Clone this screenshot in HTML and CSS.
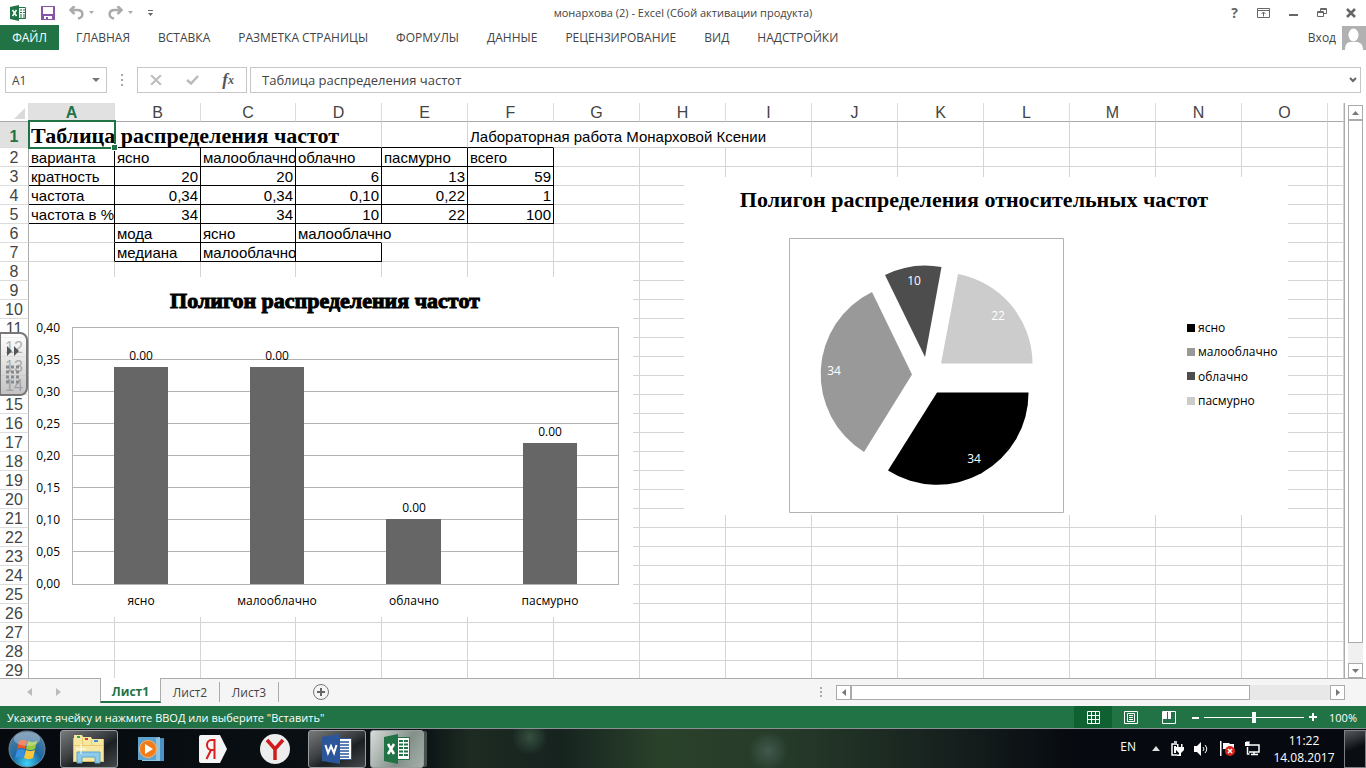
FILE: index.html
```html
<!DOCTYPE html>
<html lang="ru">
<head>
<meta charset="utf-8">
<title>монархова (2) - Excel</title>
<link rel="stylesheet" href="styles.css">
</head>
<body>
<header class="titlebar">
  <div class="quick">
    <svg class="ico-app" width="17" height="16" viewBox="0 0 17 16"><path fill="#fff" stroke="#217346" d="M8 2.5h7.5v11H8z"/><path stroke="#217346" d="M10 5h2M13 5h2M10 7.500h2M13 7.500h2M10 10h2M13 10h2M10 12h2M13 12h2"/><path fill="#217346" d="M0 2l9-2v16l-9-2z"/><path stroke="#fff" stroke-width="1.500" d="M2.500 5l4 6M6.500 5l-4 6"/></svg>
    <button class="flat" aria-label="Сохранить"><svg width="14" height="14" viewBox="0 0 14 14"><path fill="#8655a8" d="M0 0h14v14H0z"/><path fill="#fff" d="M2 1h10v7H2zM3 10h8v3H3z"/><path fill="#8655a8" d="M5 11h2v2H5z"/></svg></button>
    <button class="flat undo" aria-label="Отменить"><svg width="25" height="14" viewBox="0 0 25 14"><path fill="none" stroke="#aaa" stroke-width="2.500" d="M5.500 0L1.500 4 5.500 8M2 4h6c7 0 7 7.500 1 8.500"/><path fill="#aaa" d="M20 5h5l-2.500 3z"/></svg></button>
    <button class="flat redo" aria-label="Вернуть"><svg width="25" height="14" viewBox="0 0 25 14"><path fill="none" stroke="#aaa" stroke-width="2.500" d="M9.500 0l4 4-4 4M13 4H7C0 4 0 11.500 6 12.500"/><path fill="#aaa" d="M20 5h5l-2.500 3z"/></svg></button>
    <button class="flat more" aria-label="Настройка панели"><svg width="5" height="8" viewBox="0 0 5 8"><path fill="#666" d="M0 1h5v1H0zM0 4h5L2.500 7z"/></svg></button>
  </div>
  <h1 class="doc-title">монархова (2) - Excel (Сбой активации продукта)</h1>
  <div class="window-buttons">
    <button class="flat help" aria-label="Справка">?</button>
    <button class="flat" aria-label="Параметры ленты"><svg width="13" height="10" viewBox="0 0 13 10"><path fill="none" stroke="#666" d="M.5.5h12v9H.5zM.5 2.500h12M6.500 8.500V4M4.500 6l2-2 2 2"/></svg></button>
    <button class="flat" aria-label="Свернуть"><svg width="9" height="10" viewBox="0 0 9 10"><path fill="#666" d="M0 6h9v2H0z"/></svg></button>
    <button class="flat" aria-label="Восстановить"><svg width="10" height="10" viewBox="0 0 10 10"><path fill="none" stroke="#666" d="M.5 3.500h6v5h-6zM.5 4.500h6M3.500 3V.5h6v5H7M3 1.500h6"/></svg></button>
    <button class="flat" aria-label="Закрыть"><svg width="10" height="10" viewBox="0 0 10 10"><path stroke="#666" stroke-width="2.500" d="M1 1l8 8M9 1L1 9"/></svg></button>
  </div>
</header>
<nav class="ribbon">
  <button class="flat file">ФАЙЛ</button>
  <div class="tabs">
    <button class="flat">ГЛАВНАЯ</button>
    <button class="flat">ВСТАВКА</button>
    <button class="flat">РАЗМЕТКА СТРАНИЦЫ</button>
    <button class="flat">ФОРМУЛЫ</button>
    <button class="flat">ДАННЫЕ</button>
    <button class="flat">РЕЦЕНЗИРОВАНИЕ</button>
    <button class="flat">ВИД</button>
    <button class="flat">НАДСТРОЙКИ</button>
  </div>
  <a class="login" href="#">Вход</a>
  <svg class="avatar" width="24" height="24" viewBox="0 0 24 24"><path fill="#b1b1b1" d="M0 0h24v24H0z"/><ellipse cx="11.500" cy="9" rx="5" ry="6.500" fill="#fff"/><path fill="#fff" d="M3 24c0-7 3-8 6-8h5c4 0 7 2 7 8z"/></svg>
</nav>
<section class="formula">
  <div class="namebox"><input class="name-input" aria-label="Имя ячейки" value="A1"><svg width="8" height="4" viewBox="0 0 8 4"><path fill="#777" d="M0 0h8L4 4z"/></svg></div>
  <svg class="grip" width="2" height="12" viewBox="0 0 2 12"><path fill="#aaa" d="M0 0h2v2H0zM0 5h2v2H0zM0 10h2v2H0z"/></svg>
  <div class="fx-box">
    <button class="flat" aria-label="Отмена"><svg width="12" height="10" viewBox="0 0 12 10"><path stroke="#bbb" stroke-width="2" d="M1 0l10 10M11 0L1 10"/></svg></button>
    <button class="flat" aria-label="Ввод"><svg width="13" height="10" viewBox="0 0 13 10"><path fill="none" stroke="#bbb" stroke-width="2.500" d="M1 5l4 3.500L12 1"/></svg></button>
    <button class="flat fx" aria-label="Вставить функцию">f<small>x</small></button>
  </div>
  <div class="formula-field"><input class="formula-input" aria-label="Строка формул" value="Таблица распределения частот"><svg width="8" height="6" viewBox="0 0 8 6"><path fill="none" stroke="#666" stroke-width="2" d="M1 1l3 3 3-3"/></svg></div>
</section>
<main class="workspace">
  <div class="grid-wrap">
    <table class="grid">
      <colgroup><col class="c-num"><col class="c"><col class="c"><col class="c-wide"><col class="c"><col class="c"><col class="c"><col class="c"><col class="c"><col class="c"><col class="c"><col class="c"><col class="c"><col class="c"><col class="c"><col class="c"><col></colgroup>
      <thead><tr><th class="corner"><svg width="11" height="11" viewBox="0 0 11 11"><path fill="#dadada" d="M11 0v11H0z"/></svg></th><th class="active">A</th><th>B</th><th>C</th><th>D</th><th>E</th><th>F</th><th>G</th><th>H</th><th>I</th><th>J</th><th>K</th><th>L</th><th>M</th><th>N</th><th>O</th><th></th></tr></thead>
      <tbody>
      <tr class="first"><th class="active">1</th><td class="heading kb" colspan="4">Таблица распределения частот<span class="selection"></span></td><td class="kb"></td><td class="kb" ><span class="spill">Лабораторная работа Монарховой Ксении</span></td><td class="open"></td><td class="open"></td><td></td><td></td><td></td><td></td><td></td><td></td><td></td><td></td></tr>
      <tr class="boxed"><th>2</th><td>варианта</td><td>ясно</td><td>малооблачно</td><td>облачно</td><td>пасмурно</td><td>всего</td><td></td><td></td><td></td><td></td><td></td><td></td><td></td><td></td><td></td><td></td></tr>
      <tr class="boxed nums"><th>3</th><td>кратность</td><td>20</td><td>20</td><td>6</td><td>13</td><td>59</td><td></td><td></td><td></td><td></td><td></td><td></td><td></td><td></td><td></td><td></td></tr>
      <tr class="boxed nums"><th>4</th><td>частота</td><td>0,34</td><td>0,34</td><td>0,10</td><td>0,22</td><td>1</td><td></td><td></td><td></td><td></td><td></td><td></td><td></td><td></td><td></td><td></td></tr>
      <tr class="boxed nums"><th>5</th><td>частота в %</td><td>34</td><td>34</td><td>10</td><td>22</td><td>100</td><td></td><td></td><td></td><td></td><td></td><td></td><td></td><td></td><td></td><td></td></tr>
      <tr><th>6</th><td class="kr"></td><td class="kb kr">мода</td><td class="kb kr">ясно</td><td class="kb open">малооблачно</td><td></td><td></td><td></td><td></td><td></td><td></td><td></td><td></td><td></td><td></td><td></td><td></td></tr>
      <tr><th>7</th><td class="kr"></td><td class="kb kr">медиана</td><td class="kb kr">малооблачно</td><td class="kb kr"></td><td></td><td></td><td></td><td></td><td></td><td></td><td></td><td></td><td></td><td></td><td></td><td></td></tr>
      <tr><th>8<td><td><td><td><td><td><td><td><td><td><td><td><td><td><td><td>
      <tr><th>9<td><td><td><td><td><td><td><td><td><td><td><td><td><td><td><td>
      <tr><th>10<td><td><td><td><td><td><td><td><td><td><td><td><td><td><td><td>
      <tr><th>11<td><td><td><td><td><td><td><td><td><td><td><td><td><td><td><td>
      <tr><th>12<td><td><td><td><td><td><td><td><td><td><td><td><td><td><td><td>
      <tr><th>13<td><td><td><td><td><td><td><td><td><td><td><td><td><td><td><td>
      <tr><th>14<td><td><td><td><td><td><td><td><td><td><td><td><td><td><td><td>
      <tr><th>15<td><td><td><td><td><td><td><td><td><td><td><td><td><td><td><td>
      <tr><th>16<td><td><td><td><td><td><td><td><td><td><td><td><td><td><td><td>
      <tr><th>17<td><td><td><td><td><td><td><td><td><td><td><td><td><td><td><td>
      <tr><th>18<td><td><td><td><td><td><td><td><td><td><td><td><td><td><td><td>
      <tr><th>19<td><td><td><td><td><td><td><td><td><td><td><td><td><td><td><td>
      <tr><th>20<td><td><td><td><td><td><td><td><td><td><td><td><td><td><td><td>
      <tr><th>21<td><td><td><td><td><td><td><td><td><td><td><td><td><td><td><td>
      <tr><th>22<td><td><td><td><td><td><td><td><td><td><td><td><td><td><td><td>
      <tr><th>23<td><td><td><td><td><td><td><td><td><td><td><td><td><td><td><td>
      <tr><th>24<td><td><td><td><td><td><td><td><td><td><td><td><td><td><td><td>
      <tr><th>25<td><td><td><td><td><td><td><td><td><td><td><td><td><td><td><td>
      <tr><th>26<td><td><td><td><td><td><td><td><td><td><td><td><td><td><td><td>
      <tr><th>27<td><td><td><td><td><td><td><td><td><td><td><td><td><td><td><td>
      <tr><th>28<td><td><td><td><td><td><td><td><td><td><td><td><td><td><td><td>
      <tr><th>29<td><td><td><td><td><td><td><td><td><td><td><td><td><td><td><td>
      </tbody>
    </table>
    <svg class="chart bar-chart" width="604" height="340" viewBox="0 0 604 340">
      <text class="chart-title heavy" x="296" y="31">Полигон распределения частот</text>
      <path class="axis" d="M43 50.500h547M43 82.500h547M43 114.500h547M43 146.500h547M43 178.500h547M43 210.500h547M43 242.500h547M43 274.500h547M43 307.500h547M43.500 50v258M589.500 50v258"/>
      <g class="end"><text x="31" y="55">0,40</text><text x="31" y="87">0,35</text><text x="31" y="119">0,30</text><text x="31" y="151">0,25</text><text x="31" y="183">0,20</text><text x="31" y="215">0,15</text><text x="31" y="247">0,10</text><text x="31" y="279">0,05</text><text x="31" y="311">0,00</text></g>
      <path fill="#666" d="M85 90h54v217H85zM221 90h54v217h-54zM357 242h55v65h-55zM494 166h54v141h-54z"/>
      <g class="mid"><text x="112" y="83">0.00</text><text x="248" y="83">0.00</text><text x="385" y="235">0.00</text><text x="521" y="159">0.00</text>
      <text x="112" y="328">ясно</text><text x="248" y="328">малооблачно</text><text x="385" y="328">облачно</text><text x="521" y="328">пасмурно</text></g>
    </svg>
    <svg class="chart pie-chart" width="604" height="338" viewBox="0 0 604 338">
      <text class="chart-title" x="290" y="30">Полигон распределения относительных частот</text>
      <path class="axis" d="M105.500 61.500h274v274h-274z"/>
      <path d="M253 215.500h91.500A91.500 91.500 0 0 1 204 293.500z"/>
      <path fill="#999" d="M228 197.500L180 275A91.500 91.500 0 0 1 188 115z"/>
      <path fill="#4d4d4d" d="M241 180L201 98A91.500 91.500 0 0 1 257.500 90z"/>
      <path fill="#ccc" d="M257 186.500L274 97A91.500 91.500 0 0 1 348.500 186.500z"/>
      <g class="mid white"><text x="290" y="286">34</text><text x="150" y="198">34</text><text x="230" y="108">10</text><text x="314" y="143">22</text></g>
      <path d="M503 147h8v8h-8z"/><path fill="#999" d="M503 171h8v8h-8z"/><path fill="#4d4d4d" d="M503 195h8v8h-8z"/><path fill="#ccc" d="M503 220h8v8h-8z"/>
      <g><text x="514" y="155">ясно</text><text x="514" y="179">малооблачно</text><text x="514" y="204">облачно</text><text x="514" y="228">пасмурно</text></g>
    </svg>
    <button class="side-handle" aria-label="Панель"><svg width="15" height="42" viewBox="0 0 15 42"><path fill="#555" d="M1 3l5 5-5 5zM8 3l5 5-5 5z"/><path stroke="#8a8a8a" stroke-width="3" stroke-dasharray="3 2" d="M0 24h14M0 29h14M0 34h14M0 39h14"/></svg></button>
  </div>
  <div class="vscroll">
    <button class="sb" aria-label="Вверх"><svg width="7" height="4" viewBox="0 0 7 4"><path fill="#777" d="M0 4h7L3.500 0z"/></svg></button>
    <div class="thumb"></div><div class="track"></div>
    <button class="sb" aria-label="Вниз"><svg width="7" height="4" viewBox="0 0 7 4"><path fill="#777" d="M0 0h7L3.500 4z"/></svg></button>
  </div>
</main>
<footer class="sheetbar">
  <div class="arrows"><svg width="5" height="8" viewBox="0 0 5 8"><path fill="#bbb" d="M5 0v8L0 4z"/></svg><svg width="5" height="8" viewBox="0 0 5 8"><path fill="#bbb" d="M0 0v8l5-4z"/></svg></div>
  <button class="sheet current">Лист1</button>
  <button class="sheet">Лист2</button>
  <button class="sheet">Лист3</button>
  <button class="flat add" aria-label="Новый лист"><svg width="16" height="16" viewBox="0 0 16 16"><circle cx="8" cy="8" r="7.500" fill="none" stroke="#777"/><path stroke="#666" stroke-width="2" d="M8 4v8M4 8h8"/></svg></button>
  <svg class="grip" width="2" height="10" viewBox="0 0 2 10"><path fill="#aaa" d="M0 0h2v2H0zM0 4h2v2H0zM0 8h2v2H0z"/></svg>
  <div class="hscroll">
    <button class="sb" aria-label="Влево"><svg width="4" height="7" viewBox="0 0 4 7"><path fill="#777" d="M4 0v7L0 3.500z"/></svg></button>
    <div class="thumb"></div><div class="track"></div>
    <button class="sb" aria-label="Вправо"><svg width="4" height="7" viewBox="0 0 4 7"><path fill="#777" d="M0 0v7l4-3.500z"/></svg></button>
  </div>
</footer>
<div class="status">
  <span class="hint">Укажите ячейку и нажмите ВВОД или выберите "Вставить"</span>
  <button class="flat view on" aria-label="Обычный"><svg width="13" height="13" viewBox="0 0 13 13"><path fill="none" stroke="#fff" d="M.5.5h12v12H.5zM4.500 0v13M8.500 0v13M0 4.500h13M0 8.500h13"/></svg></button>
  <button class="flat view" aria-label="Разметка страницы"><svg width="14" height="13" viewBox="0 0 14 13"><path fill="none" stroke="#fff" d="M.5.5h13v12H.5zM3.500 2.500h7v8h-7zM5 4.500h4M5 6.500h4M5 8.500h4"/></svg></button>
  <button class="flat view" aria-label="Страничный"><svg width="14" height="13" viewBox="0 0 14 13"><path fill="none" stroke="#fff" d="M.5.5h13v12H.5z"/><path fill="#fff" d="M1 1h4v7H1zM6 1h3v7H6z"/></svg></button>
  <button class="flat zoom-step" aria-label="Уменьшить"><svg width="7" height="7" viewBox="0 0 7 7"><path fill="#fff" d="M0 3h7v2H0z"/></svg></button>
  <input class="zoom" type="range" min="0" max="100" value="50" aria-label="Масштаб">
  <button class="flat zoom-step" aria-label="Увеличить"><svg width="8" height="8" viewBox="0 0 8 8"><path fill="#fff" d="M0 3h8v2H0zM3 0h2v8H3z"/></svg></button>
  <span class="percent">100%</span>
</div>
<div class="taskbar">
  <button class="flat start" aria-label="Пуск"><svg width="38" height="38" viewBox="0 0 38 38"><defs><radialGradient id="orb" cx=".5" cy=".9" r=".9"><stop offset="0" stop-color="#3fd4f5"/><stop offset=".45" stop-color="#1a6aa5"/><stop offset="1" stop-color="#5c7f9c"/></radialGradient></defs><circle cx="19" cy="19" r="18" fill="url(#orb)" stroke="#6b8798"/><path fill="#e8582a" d="M11 11c3-2 5-1.500 8 0l-2 8c-3-1.500-5-1.500-8 0z"/><path fill="#9cc83c" d="M20 11c3 1.500 6 1.500 9 0l-2 8c-3 1.500-6 1.500-9 0z"/><path fill="#3b8fe0" d="M9 20c3-1.500 5-1 8 0l-2 8c-3-1.500-5-1.500-8 0z"/><path fill="#fbc63a" d="M18 20c3 1.500 5 1.500 9 0l-2 8c-3 1.500-6 1.500-9 0z"/><ellipse cx="19" cy="9" rx="13" ry="7" fill="#fff" opacity=".3"/></svg></button>
  <button class="task open-task" aria-label="Проводник"><svg width="34" height="30" viewBox="0 0 34 30"><path fill="#dcb95a" d="M1 4h10l2 3h8l2-2h9v23H1z"/><path fill="#f8e7a1" d="M2 1h8l1 2h8l1 2h11v22H2z"/><path fill="#e8ca70" d="M2 11h29v1H2zM10 4h1v8h-1zM19 6h1v6h-1z"/><path fill="#30a850" d="M5 2h3v2H5z"/><path fill="#d43a2a" d="M13 4h3v2h-3z"/><path fill="#3a90d0" d="M22 6h4v2h-4z"/><path fill="#8ecbea" stroke="#5ba4ca" d="M5 29V18h23v11h-5v-6H10v6z"/><path stroke="#fff" d="M9 10v10M4 15h10"/></svg></button>
  <button class="task" aria-label="Проигрыватель"><svg width="28" height="26" viewBox="0 0 28 26"><path fill="#4b93c4" d="M8 3l19-1v23H8z"/><path fill="#8fc4e2" d="M5 2l18-1v24H5z"/><path fill="#5ea4ce" d="M1 1h18v23H1z"/><circle cx="11" cy="13" r="8.500" fill="#f07c1c" stroke="#f9b46d"/><path fill="#fff" d="M8 8l8 5-8 5z"/></svg></button>
  <button class="task" aria-label="Яндекс"><svg width="28" height="28" viewBox="0 0 28 28"><path fill="#f5f5f5" d="M2 0h19l7 14-7 14H2c-2 0-2-2-2-2V2s0-2 2-2z"/><path fill="none" stroke="#d81e1e" stroke-width="2" d="M15.500 24V5h-3c-6 0-6 10 0 10h3M12 15L7.500 24"/></svg></button>
  <button class="task" aria-label="Яндекс.Браузер"><svg width="30" height="30" viewBox="0 0 30 30"><circle cx="15" cy="15" r="15" fill="#ededed"/><path fill="none" stroke="#cf1b1b" stroke-width="3.500" d="M7 6l8 9 8-9M15 14v12"/></svg></button>
  <button class="task open-task" aria-label="Word"><svg width="31" height="30" viewBox="0 0 31 30"><path fill="#fff" stroke="#2b579a" d="M17 4.500h12.500v21H17z"/><path stroke="#2b579a" stroke-width="1.500" d="M18 8h9M18 11h9M18 14h9M18 17h9M18 20h9M18 23h9"/><path fill="#2b579a" d="M0 3l18-3v30L0 27z"/><path fill="none" stroke="#fff" stroke-width="2" d="M3.500 11l2.500 8 3-7 3 7 2.500-8"/></svg></button>
  <button class="task open-task lit" aria-label="Excel"><svg width="27" height="30" viewBox="0 0 27 30"><path fill="#fff" stroke="#217346" d="M13 3.500h12.500v22H13z"/><path stroke="#217346" stroke-width="2" d="M15 7h4M20 7h4M15 10.500h4M20 10.500h4M15 14h4M20 14h4M15 17.500h4M20 17.500h4M15 21h4M20 21h4"/><path fill="#217346" d="M0 3l14-3v30L0 27z"/><path stroke="#fff" stroke-width="2.500" d="M4 10l6 10M10 10L4 20"/></svg></button>
  <div class="tray">
    <span class="lang">EN</span>
    <svg width="8" height="5" viewBox="0 0 8 5"><path fill="#ddd" d="M0 5h8L4 0z"/></svg>
    <svg width="14" height="16" viewBox="0 0 14 16"><path fill="none" stroke="#fff" stroke-width="1.500" d="M7 3H2v11h5M4 1h3"/><path fill="#fff" d="M4 5h2v7H4zM7 3h1.500v3H7zM11 3h1.500v3H11zM6 6h8v3l-3 3h-2L6 9zM9 11h2v4H7v-1.500h2z"/></svg>
    <svg width="16" height="14" viewBox="0 0 16 14"><path fill="#fff" d="M0 4h3l4-4v14L3 10H0z"/><path fill="none" stroke="#fff" d="M9 5q2 2 0 4M11 3q3.500 4 0 8"/></svg>
    <svg width="15" height="15" viewBox="0 0 15 15"><path fill="#fff" d="M0 0h1.500v15H0zM3 2h6l1 1h4v5H3z"/><circle cx="10" cy="10" r="5" fill="#d8261c"/><path stroke="#fff" stroke-width="1.500" d="M8 8l4 4M12 8l-4 4"/></svg>
    <svg width="15" height="15" viewBox="0 0 15 15"><path fill="none" stroke="#fff" stroke-width="1.500" d="M4 4h10v7H4M9 11v2M6 13.500h7M2.500 6v7h2"/><path fill="#fff" d="M0 1h1.500v-1h1v1h1V0h1v5H0z"/></svg>
    <div class="clock"><span>11:22</span><span>14.08.2017</span></div>
  </div>
  <button class="show-desktop" aria-label="Свернуть все окна"></button>
</div>
</body>
</html>
```
FILE: styles.css
```css
* { box-sizing: border-box; }
body { margin: 0; height: 100vh; display: flex; flex-direction: column; overflow: hidden; background: #fff; color: #444; font: 12px "Open Sans", "Noto Sans", sans-serif; }
svg { display: block; flex: none; }
button, input { font: inherit; color: inherit; padding: 0; border: 0; background: none; }
.flat { display: flex; align-items: center; justify-content: center; white-space: nowrap; }

.titlebar { flex: none; height: 25px; display: grid; grid-template-columns: 1fr auto 1fr; align-items: center; }
.quick { display: flex; align-items: center; padding-left: 10px; gap: 14px; }
.more { margin-left: 1px; }
.doc-title { margin: 0; font-size: 11px; font-weight: 400; }
.window-buttons { display: flex; justify-content: flex-end; align-items: center; gap: 19px; padding-right: 10px; }
.help { font-size: 14px; font-weight: 700; color: #666; }

.ribbon { flex: none; height: 25px; display: flex; align-items: center; }
.file { width: 59px; height: 25px; background: #217346; color: #fff; }
.tabs { display: flex; flex: 1; gap: 28px; padding-left: 17px; }
.login { color: #444; text-decoration: none; padding-right: 6px; }

.formula { flex: none; display: flex; align-items: center; height: 53px; padding: 7px 5px 0; }
.formula > div { height: 26px; border: 1px solid #c6c6c6; display: flex; align-items: center; }
.namebox { width: 102px; padding: 0 6px; }
.name-input { width: 100%; min-width: 0; flex: 1; }
.grip { margin: 0 14px; }
.fx-box { width: 110px; justify-content: space-between; padding: 0 12px; }
.fx { font: italic 700 17px "Liberation Serif", serif; color: #555; }
.fx small { font-size: 12px; }
.formula-field { flex: 1; margin-left: 3px; padding: 0 3px 0 11px; }
.formula-input { flex: 1; min-width: 0; font-size: 13px; }

.workspace { flex: 1; min-height: 0; display: flex; }
.grid-wrap { flex: 1; min-width: 0; position: relative; overflow: hidden; border-right: 1px solid #ababab; }
.grid { width: 100%; table-layout: fixed; border-collapse: separate; border-spacing: 0; font: 15px "Liberation Sans", Arial, sans-serif; color: #000; }
.c-num { width: 29px; }
.c { width: 86px; }
.c-wide { width: 95px; }
.grid th { height: 19px; padding: 2px 0 0; font-size: 16px; line-height: 16px; font-weight: 400; color: #444; border-right: 1px solid #dcdcdc; border-bottom: 1px solid #ababab; }
.grid tbody th { border-right-color: #ababab; border-bottom-color: #dcdcdc; }
.grid .active { background: #e1e1e1; color: #217346; font-weight: 700; }
.grid .corner svg { margin-left: 14px; }
.grid td { height: 19px; padding: 2px 2px 0; line-height: 16px; white-space: nowrap; border-right: 1px solid #d4d4d4; border-bottom: 1px solid #d4d4d4; }
.grid .first > * { height: 26px; vertical-align: bottom; line-height: 20px; }
.grid .heading { position: relative; font: 700 22px/23px "Liberation Serif", serif; }
.selection { position: absolute; left: -1px; top: -2px; width: 88px; height: 29px; border: 2px solid #217346; }
.selection::after { content: ""; position: absolute; right: -3px; bottom: -3px; width: 5px; height: 5px; background: #217346; outline: 1px solid #fff; }
.grid .open, .grid td:has(.spill) { border-right-color: #fff; }
.grid .kb, .boxed td:nth-child(-n+7) { border-bottom-color: #000; }
.grid .kr, .boxed td:nth-child(-n+7) { border-right-color: #000; }
.nums td:nth-child(n+3) { text-align: right; }

.chart { position: absolute; background: #fff; font: 12px "Open Sans", sans-serif; }
.bar-chart { left: 29px; top: 174px; }
.pie-chart { left: 684px; top: 74px; }
.chart-title { font: 700 22px "Liberation Serif", serif; text-anchor: middle; }
.heavy { stroke: #000; stroke-width: 1px; }
.axis { fill: none; stroke: #b3b3b3; }
.end { text-anchor: end; }
.mid { text-anchor: middle; }
.white { fill: #fff; }
.side-handle { position: absolute; left: 0; top: 229px; width: 28px; height: 64px; padding: 0 0 0 5px; border: 2px solid #777; border-left: 1px solid #777; border-radius: 0 8px 8px 0; background: linear-gradient(#ffffff99, #b4b4b4cc); }

.vscroll { width: 21px; padding: 2px 2px 0 3px; display: flex; flex-direction: column; }
.vscroll .track { height: 20px; background: #f0f0f0; }
.sb { flex: none; width: 15px; height: 15px; border: 1px solid #ababab; background: #fff; display: flex; align-items: center; justify-content: center; }
.thumb { flex: 1; border: 1px solid #ababab; background: #fff; }
.vscroll .sb, .vscroll .thumb, .vscroll .track { width: 15px; }

.sheetbar { flex: none; height: 28px; display: flex; align-items: flex-start; background: #f5f5f5; border-top: 1px solid #ababab; }
.arrows { width: 100px; display: flex; gap: 24px; padding: 9px 0 0 27px; }
.sheet { width: 59px; height: 20px; margin-top: 3px; border-right: 1px solid #ababab; }
.sheet.current { width: 61px; height: 25px; margin-top: -1px; padding-top: 3px; background: #fff; color: #217346; font-weight: 700; border: 1px solid #ababab; border-width: 0 1px 2px; border-bottom-color: #217346; }
.add { margin: 5px auto 0 34px; }
.sheetbar .grip { margin-top: 8px; }
.hscroll { width: 509px; height: 15px; margin: 6px 21px 0 0; display: flex; background: #e8e8e8; }
.hscroll .track { width: 80px; }

.status { flex: none; height: 22px; display: flex; align-items: center; background: #217346; color: #fff; font-size: 11px; }
.hint { flex: 1; padding-left: 7px; }
.view { width: 38px; height: 22px; }
.on { background: #0f6132; }
.zoom-step { width: 14px; height: 22px; }
.zoom { appearance: none; width: 100px; height: 22px; margin: 0 2px; background: linear-gradient(#fff, #fff) center / 100% 1px no-repeat; }
.zoom::-webkit-slider-thumb { appearance: none; width: 4px; height: 11px; background: #fff; }
.percent { width: 46px; text-align: right; padding-right: 9px; }

.taskbar { flex: none; height: 40px; display: flex; align-items: center; border-top: 1px solid #8a9094; background: radial-gradient(circle at 530px 8px, #35503f, transparent 18px), radial-gradient(circle at 768px 22px, #40594d, transparent 20px), linear-gradient(90deg, #060a0f 0, #0a1114 420px, #1d2b22 470px, #16231f 560px, #2a412a 660px, #263a29 790px, #16201e 950px, #06090f 1080px, #06090f); color: #fff; }
.start { width: 54px; height: 39px; }
.task { width: 58px; height: 38px; margin-left: 4px; display: flex; align-items: center; justify-content: center; }
.start + .task { margin-left: 6px; }
.open-task { border: 1px solid #9a9d9d; border-radius: 3px; background: linear-gradient(150deg, #77797a, #3a3d3f 45%, #1c2022 60%, #44484a); }
.lit { width: 54px; background: linear-gradient(120deg, #d8dcda, #83908a 60%, #a5b0aa); box-shadow: 4px 0 0 -1px #4a504d; }
.tray { margin-left: auto; display: flex; align-items: center; gap: 10px; }
.lang { margin-right: 6px; padding-bottom: 4px; }
.clock { width: 64px; display: flex; flex-direction: column; text-align: center; line-height: 17px; margin: 0 8px 0 2px; }
.show-desktop { width: 22px; height: 38px; border: 1px solid #7c8084; background: linear-gradient(160deg, #55595c, #0a0d12 50%); }
```
